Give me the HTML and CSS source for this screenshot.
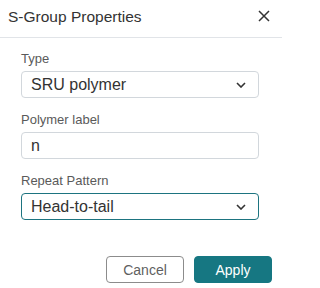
FILE: index.html
```html
<!DOCTYPE html>
<html lang="en">
<head>
<meta charset="utf-8">
<title>S-Group Properties</title>
<link rel="stylesheet" href="styles.css">
</head>
<body>
<div class="dialog">
  <div class="header">
    <div class="title">S-Group Properties</div>
    <button class="close" aria-label="Close">
      <svg width="12" height="12" viewBox="0 0 12 12"><path d="M1 1L11 11M11 1L1 11" stroke="#333" stroke-width="1.5" fill="none"/></svg>
    </button>
  </div>
  <div class="body">
    <div class="field">
      <div class="label">Type</div>
      <div class="control select">
        <span class="value">SRU polymer</span>
        <svg class="chev" width="10" height="6" viewBox="0 0 10 6"><path d="M1 1L5 5L9 1" stroke="#333" stroke-width="1.6" fill="none"/></svg>
      </div>
    </div>
    <div class="field">
      <div class="label">Polymer label</div>
      <div class="control input">
        <span class="value">n</span>
      </div>
    </div>
    <div class="field">
      <div class="label">Repeat Pattern</div>
      <div class="control select focused">
        <span class="value">Head-to-tail</span>
        <svg class="chev" width="10" height="6" viewBox="0 0 10 6"><path d="M1 1L5 5L9 1" stroke="#333" stroke-width="1.6" fill="none"/></svg>
      </div>
    </div>
  </div>
  <div class="footer">
    <button class="btn btn-cancel">Cancel</button>
    <button class="btn btn-apply">Apply</button>
  </div>
</div>
</body>
</html>
```
FILE: styles.css
```css
* { box-sizing: border-box; }
html, body { margin: 0; padding: 0; background: #fff; }
body {
  font-family: "Liberation Sans", Arial, sans-serif;
  color: #333;
}
.dialog {
  width: 282px;
  height: 288px;
  display: flex;
  flex-direction: column;
}
.header {
  height: 38px;
  display: flex;
  justify-content: space-between;
  align-items: flex-start;
  padding: 8px 12px 0 8px;
  border-bottom: 1px solid #e1e4e8;
}
.title {
  font-size: 15.5px;
  line-height: 18px;
  color: #333;
}
.close {
  border: 0;
  background: none;
  padding: 0;
  margin-top: 2px;
  width: 12px;
  height: 12px;
  display: flex;
}
.body {
  padding: 13px 23px 0 21px;
}
.field {
  margin-bottom: 14px;
}
.field:last-child { margin-bottom: 0; }
.label {
  font-size: 13px;
  line-height: 16px;
  color: #5a5a5a;
  margin-bottom: 4px;
}
.control {
  height: 27px;
  width: 238px;
  border: 1px solid #d2d7dc;
  border-radius: 4px;
  display: flex;
  align-items: center;
  justify-content: space-between;
  padding: 0 12px 0 9px;
  font-size: 16px;
  color: #333;
}
.control.focused {
  border-color: #1d7480;
}
.value { line-height: 18px; }
.chev { display: block; }
.footer {
  margin-top: 36px;
  display: flex;
  justify-content: flex-end;
  gap: 10px;
  padding-right: 10px;
}
.btn {
  width: 78px;
  height: 27px;
  border-radius: 4px;
  font-family: "Liberation Sans", Arial, sans-serif;
  font-size: 14px;
  padding: 0;
}
.btn-cancel {
  background: #fff;
  border: 1px solid #8c8c8c;
  color: #5f5f5f;
}
.btn-apply {
  background: #167782;
  border: 1px solid #167782;
  color: #fff;
}
```
